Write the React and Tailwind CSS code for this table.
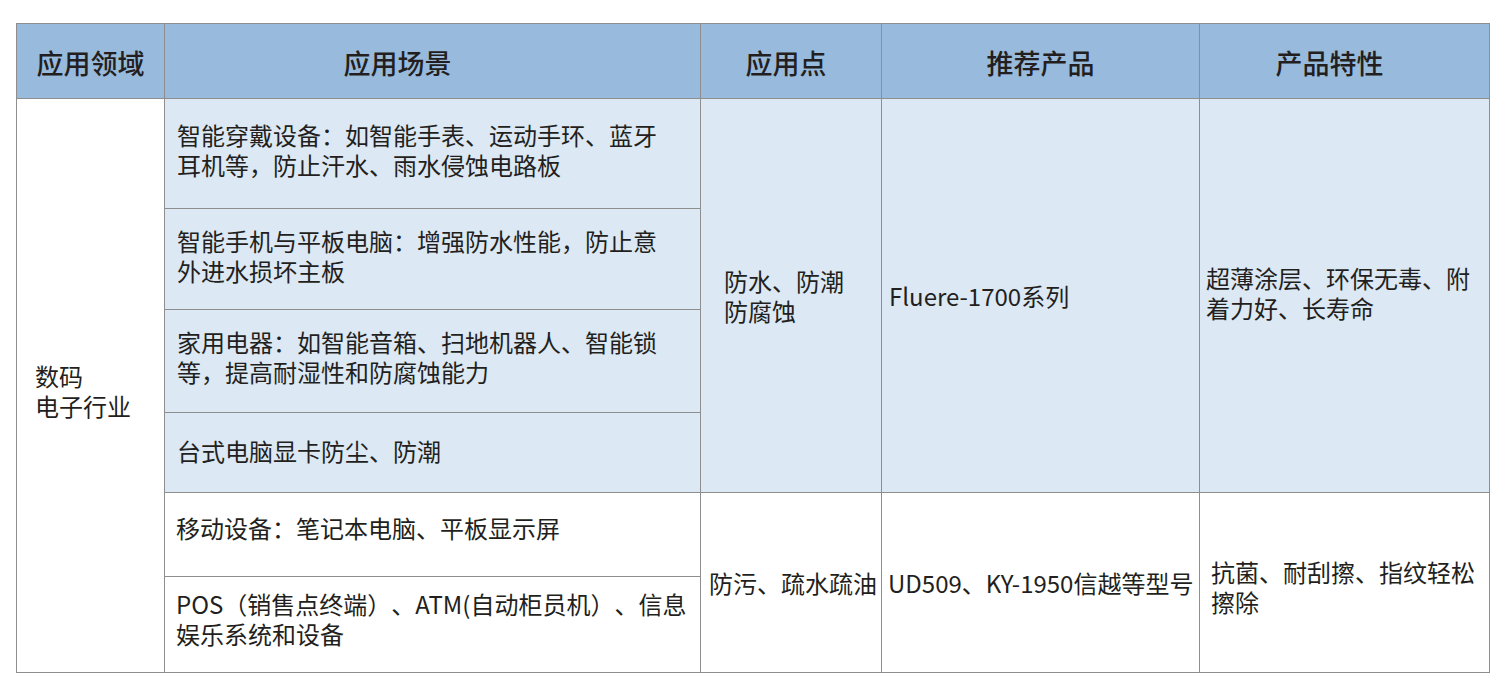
const rows = [
  { scene: '智能穿戴设备：如智能手表、运动手环、蓝牙耳机等，防止汗水、雨水侵蚀电路板', h: 'h-[110px]', pb: 'pb-[8px]' },
  { scene: '智能手机与平板电脑：增强防水性能，防止意外进水损坏主板', h: 'h-[101px]', pb: 'pb-[6px]' },
  { scene: '家用电器：如智能音箱、扫地机器人、智能锁等，提高耐湿性和防腐蚀能力', h: 'h-[103px]', pb: 'pb-[9px]' },
  { scene: '台式电脑显卡防尘、防潮', h: 'h-[80px]', pb: 'pb-[4px]' },
];

const cell = 'border border-[#8e8e8e] align-middle';

export default function App() {
  return (
    <div
      className="w-[1504px] h-[689px] bg-white pt-[23px] pl-[16px] text-[#231f20] [text-spacing-trim:space-all]"
      style={{ fontFamily: '"Noto Sans CJK SC", "Noto Sans", sans-serif' }}
    >
      <table className="border-collapse table-fixed w-[1473px] text-[24px] leading-[30px]">
        <colgroup>
          <col className="w-[148px]" />
          <col className="w-[536px]" />
          <col className="w-[181px]" />
          <col className="w-[318px]" />
          <col className="w-[290px]" />
        </colgroup>
        <thead>
          <tr className="h-[75px] bg-[#98badc] text-[27px]">
            <th className={`${cell} text-center font-medium pt-[3px]`}>应用领域</th>
            <th className={`${cell} text-center font-medium pt-[3px] pr-[70px]`}>应用场景</th>
            <th className={`${cell} text-center font-medium pt-[3px] pr-[10px]`}>应用点</th>
            <th className={`${cell} text-center font-medium pt-[3px]`}>推荐产品</th>
            <th className={`${cell} text-center font-medium pt-[3px] pr-[30px]`}>产品特性</th>
          </tr>
        </thead>
        <tbody>
          {rows.map((r, i) => (
            <tr key={i} className={r.h}>
              {i === 0 && (
                <td rowSpan={6} className={`${cell} bg-white pl-[18px] pr-2 pt-[10px]`}>
                  数码
                  <br />
                  电子行业
                </td>
              )}
              <td className={`${cell} bg-[#dce8f4] pl-[12px] pr-[30px] ${r.pb}`}>{r.scene}</td>
              {i === 0 && (
                <>
                  <td rowSpan={4} className={`${cell} bg-[#dce8f4] pl-[23px] pr-2`}>
                    防水、防潮
                    <br />
                    防腐蚀
                  </td>
                  <td rowSpan={4} className={`${cell} bg-[#dce8f4] pl-[7px] pr-2`}>
                    Fluere-1700系列
                  </td>
                  <td rowSpan={4} className={`${cell} bg-[#dce8f4] pl-[6px] pr-[8px] pb-[6px]`}>
                    超薄涂层、环保无毒、附着力好、长寿命
                  </td>
                </>
              )}
            </tr>
          ))}
          <tr className="h-[84px]">
            <td className={`${cell} pl-[11px] pr-2 pb-[14px]`}>移动设备：笔记本电脑、平板显示屏</td>
            <td rowSpan={2} className={`${cell} pl-[8px] pr-1 whitespace-nowrap`}>
              防污、疏水疏油
            </td>
            <td rowSpan={2} className={`${cell} pl-[6px] pr-1 whitespace-nowrap`}>
              UD509、KY-1950信越等型号
            </td>
            <td rowSpan={2} className={`${cell} pl-[11px] pr-[12px] pt-[9px]`}>
              抗菌、耐刮擦、指纹轻松擦除
            </td>
          </tr>
          <tr className="h-[96px]">
            <td className={`${cell} pl-[11px] pr-2 pb-[12px] whitespace-nowrap`}>
              POS（销售点终端）、ATM(自动柜员机）、信息
              <br />
              娱乐系统和设备
            </td>
          </tr>
        </tbody>
      </table>
    </div>
  );
}
